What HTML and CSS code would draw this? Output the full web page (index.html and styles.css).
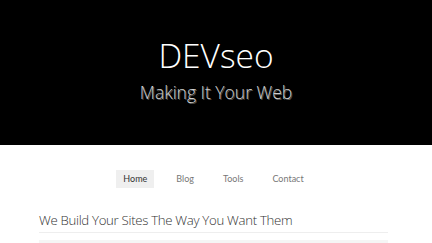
FILE: index.html
```html
<!DOCTYPE html>
<html>
<head>
<meta charset="utf-8">
<link rel="stylesheet" href="styles.css">
</head>
<body>
<header class="hero">
  <h1 class="title">DEVseo</h1>
  <p class="tagline">Making It Your Web</p>
</header>
<nav class="nav">
  <a class="nav-item active">Home</a>
  <a class="nav-item">Blog</a>
  <a class="nav-item">Tools</a>
  <a class="nav-item">Contact</a>
</nav>
<main class="content">
  <h2 class="heading">We Build Your Sites The Way You Want Them</h2>
  <div class="panel"></div>
</main>
</body>
</html>
```
FILE: styles.css
```css
html, body {
  margin: 0;
  padding: 0;
  background: #fff;
  font-family: "Open Sans", "Noto Sans", sans-serif;
  overflow: hidden;
}
.hero {
  background: #000;
  height: 145px;
  display: flex;
  flex-direction: column;
  align-items: center;
  box-sizing: border-box;
  padding-top: 33px;
}
.title {
  margin: 0;
  color: #fff;
  font-weight: 300;
  font-size: 33.5px;
  line-height: 44px;
}
.tagline {
  margin: 0;
  margin-top: 3px;
  font-weight: 300;
  font-size: 17.5px;
  line-height: 24px;
  color: #cfcfcf;
  text-shadow: 1px 1px 0 #555;
}
.nav {
  display: flex;
  justify-content: center;
  margin-top: 25px;
  margin-right: 5px;
}
.nav-item {
  font-family: "Lato", "Open Sans", sans-serif;
  font-size: 9px;
  line-height: 18px;
  padding: 0 7px;
  margin: 0 7.5px;
  color: #777;
}
.nav-item.active {
  background: #efefef;
  color: #333;
}
.content {
  margin: 23px 44px 0 39px;
}
.heading {
  margin: 0;
  font-weight: 300;
  font-size: 13.2px;
  letter-spacing: -0.3px;
  line-height: 18px;
  color: #333;
  padding-bottom: 3px;
  border-bottom: 1px solid #eeeeee;
}
.panel {
  margin-top: 7px;
  height: 10px;
  background: #f5f5f5;
}
```
